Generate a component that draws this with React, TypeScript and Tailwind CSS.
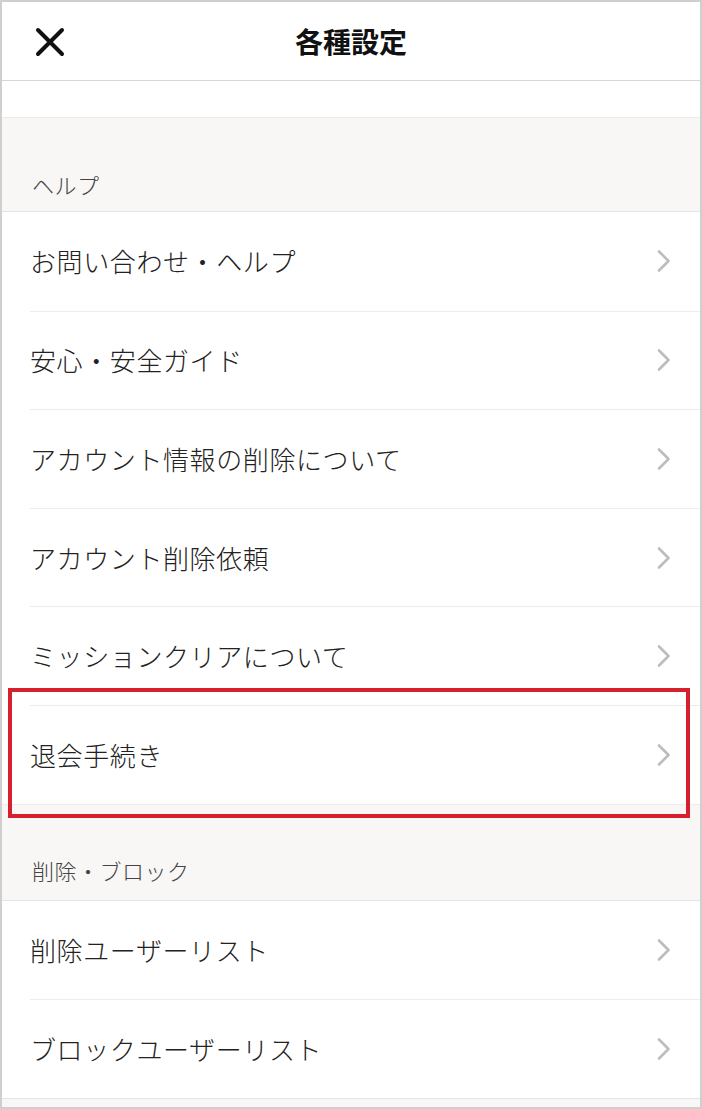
import React from "react";

const font = { fontFamily: '"Noto Sans CJK JP", "Noto Sans", sans-serif' };

const Chevron = () => (
  <svg width="16" height="24" viewBox="0 0 16 24" fill="none" className="shrink-0">
    <path d="M3 2.5 L12.5 12 L3 21.5" stroke="#bdbdbd" strokeWidth="2.6" strokeLinecap="round" strokeLinejoin="round" />
  </svg>
);

const Row = ({ label, first }: { label: string; first?: boolean }) => (
  <div className="bg-white pl-[28px]">
    <div
      className={`h-[98.6px] flex items-center justify-between pr-[28px] ${
        first ? "" : "border-t border-[#ececec]"
      }`}
    >
      <span className="text-[26px] font-light tracking-[0.6px] text-[#222222] leading-none">{label}</span>
      <Chevron />
    </div>
  </div>
);

const SectionLabel = ({ label, h, pb }: { label: string; h: string; pb: string }) => (
  <div className={`bg-[#f8f7f5] ${h} ${pb} flex items-end px-[30px] border-b border-[#e6e4e1]`}>
    <span className="text-[22px] font-light tracking-[0.5px] text-[#444444] leading-none">{label}</span>
  </div>
);

const App = () => {
  return (
    <div style={font} className="relative w-[702px] h-[1109px] overflow-hidden border-2 border-[#cfcfcf] bg-[#f8f7f5]">
      {/* header */}
      <header className="relative h-[79px] bg-white border-b border-[#d6d6d6] flex items-center justify-center">
        <button className="absolute left-[32px] top-[24px] w-[32px] h-[32px] flex items-center justify-center">
          <svg width="30" height="30" viewBox="0 0 30 30">
            <path d="M3 3 L27 27 M27 3 L3 27" stroke="#111" strokeWidth="4" strokeLinecap="round" />
          </svg>
        </button>
        <h1 className="text-[28px] font-bold text-[#111] leading-none">各種設定</h1>
      </header>

      <div className="h-[37px] bg-white border-b border-[#ebebeb]" />

      <SectionLabel label="ヘルプ" h="h-[94px]" pb="pb-[16px]" />
      <Row label="お問い合わせ・ヘルプ" first />
      <Row label="安心・安全ガイド" />
      <Row label="アカウント情報の削除について" />
      <Row label="アカウント削除依頼" />
      <Row label="ミッションクリアについて" />
      <Row label="退会手続き" />

      <div className="border-t border-[#ececec]" />
      <SectionLabel label="削除・ブロック" h="h-[96px]" pb="pb-[19px]" />
      <Row label="削除ユーザーリスト" first />
      <Row label="ブロックユーザーリスト" />
      <div className="border-t border-[#e6e4e1]" />

      {/* highlight */}
      <div className="absolute left-[6px] top-[686px] w-[682px] h-[130px] border-[4px] border-[#d7202d] pointer-events-none" />
    </div>
  );
};

export default App;
